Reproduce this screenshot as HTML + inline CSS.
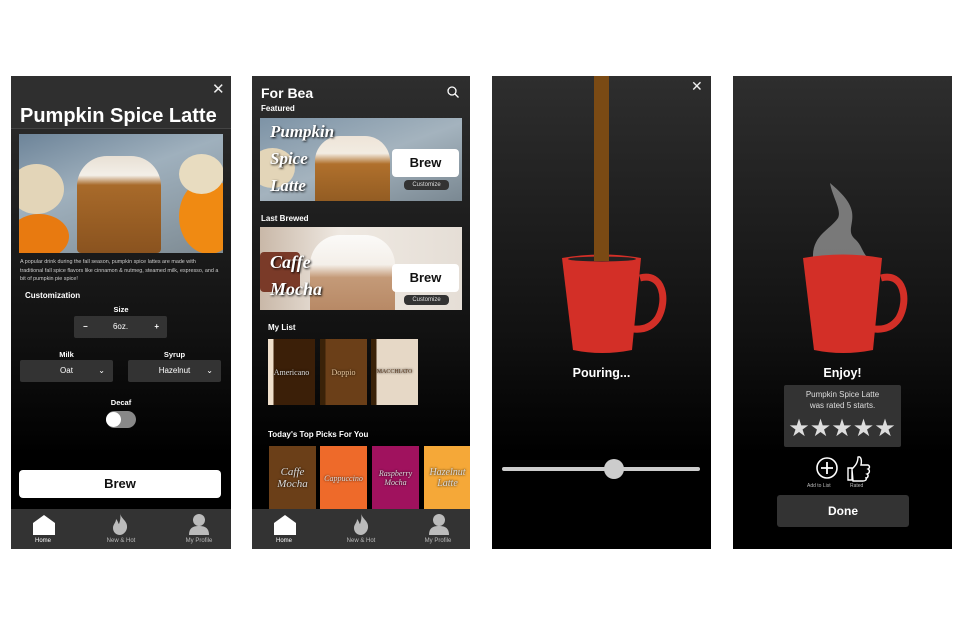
<!DOCTYPE html>
<html><head><meta charset="utf-8"><style>
*{margin:0;padding:0;box-sizing:border-box}
body{width:964px;height:626px;background:#fff;position:relative;overflow:hidden;font-family:"Liberation Sans",sans-serif;color:#fff}
.s{position:absolute;top:76px;height:473px;background:linear-gradient(#2e2e2e,#111 55%,#000 80%);overflow:hidden}
.a{position:absolute}
.nav{position:absolute;left:0;right:0;bottom:0;height:40px;background:#333}
.nav div{position:absolute;top:29px;font-size:6px;color:#bbb;width:60px;text-align:center}
.b{font-weight:bold}
.dd{position:absolute;height:22px;background:#333;border-radius:2px;font-size:8px;line-height:22px;text-align:center}
.tile{position:absolute;width:47px;height:66px;font-family:"Liberation Serif",serif;font-size:8px;color:#ddd;display:flex;align-items:center;justify-content:center;text-shadow:0 0 2px #000}
.scr{font-family:"Liberation Serif",serif;font-style:italic;font-weight:bold;color:#fff;text-shadow:1px 1px 2px #000}
.brew{position:absolute;background:#fff;color:#111;border-radius:4px;font-weight:bold;text-align:center}
.cz{position:absolute;background:#333;color:#ddd;border-radius:4px;font-size:6px;text-align:center}
</style></head><body>

<!-- Screen 1 -->
<div class="s" style="left:11px;width:220px">
 <div class="a" style="left:0;top:0;width:220px;height:53px;background:#2f2f2f;border-bottom:1px solid #444"></div>
 <div class="a" style="left:201px;top:4px;font-size:15px;color:#eee">✕</div>
 <div class="a b" style="left:9px;top:29px;font-size:20px">Pumpkin Spice Latte</div>
 <div class="a" style="left:8px;top:58px;width:204px;height:119px;background:linear-gradient(160deg,#6d8499,#9fb0bd 40%,#7d8a92);overflow:hidden">
  <div class="a" style="left:58px;top:22px;width:84px;height:97px;background:linear-gradient(#e8e0d4 0,#f3efe8 20%,#a86a2a 30%,#8a531f);border-radius:30px 30px 4px 4px"></div>
  <div class="a" style="left:-10px;top:80px;width:60px;height:45px;background:#e87a10;border-radius:50%"></div>
  <div class="a" style="left:-10px;top:30px;width:55px;height:50px;background:#e3d5b8;border-radius:50%"></div>
  <div class="a" style="left:160px;top:45px;width:60px;height:75px;background:#f08a12;border-radius:50%"></div>
  <div class="a" style="left:160px;top:20px;width:45px;height:40px;background:#e8dcc0;border-radius:50%"></div>
 </div>
 <div class="a" style="left:9px;top:182px;width:200px;font-size:5.4px;line-height:8.5px;color:#ccc">A popular drink during the fall season, pumpkin spice lattes are made with traditional fall spice flavors like cinnamon &amp; nutmeg, steamed milk, espresso, and a bit of pumpkin pie spice!</div>
 <div class="a b" style="left:14px;top:215px;font-size:8px">Customization</div>
 <div class="a b" style="left:0;width:220px;text-align:center;top:229px;font-size:7.5px">Size</div>
 <div class="dd" style="left:63px;top:240px;width:93px"><span style="position:absolute;left:9px" class="b">−</span>6oz.<span style="position:absolute;right:8px" class="b">+</span></div>
 <div class="a b" style="left:9px;width:93px;text-align:center;top:274px;font-size:7.5px">Milk</div>
 <div class="a b" style="left:117px;width:93px;text-align:center;top:274px;font-size:7.5px">Syrup</div>
 <div class="dd" style="left:9px;top:284px;width:93px">Oat<span style="position:absolute;right:8px">⌄</span></div>
 <div class="dd" style="left:117px;top:284px;width:93px">Hazelnut<span style="position:absolute;right:8px">⌄</span></div>
 <div class="a b" style="left:0;width:220px;text-align:center;top:322px;font-size:7.5px">Decaf</div>
 <div class="a" style="left:95px;top:335px;width:30px;height:17px;border-radius:9px;background:#888"></div>
 <div class="a" style="left:95px;top:336px;width:15px;height:15px;border-radius:50%;background:#fff"></div>
 <div class="brew" style="left:8px;top:394px;width:202px;height:28px;font-size:13px;line-height:28px">Brew</div>
 <div class="nav">
  <svg class="a" style="left:22px;top:6px" width="22" height="20" viewBox="0 0 22 20"><path d="M0 8L11 0L22 8V20H0Z" fill="#fff"/></svg>
  <svg class="a" style="left:101px;top:4px" width="16" height="22" viewBox="0 0 16 22"><path d="M8 0C9 6 16 8 15 15C14 20 10 22 8 22C4 22 1 19 1 15C1 11 4 10 4 6C6 8 6 10 7 11C8 8 9 5 8 0Z" fill="#bbb"/></svg>
  <svg class="a" style="left:177px;top:4px" width="22" height="22" viewBox="0 0 22 22"><circle cx="11" cy="7" r="6" fill="#bbb"/><path d="M1 22C1 15 5 13 11 13C17 13 21 15 21 22Z" fill="#bbb"/></svg>
  <div style="left:2px;color:#fff">Home</div><div style="left:80px">New &amp; Hot</div><div style="left:158px">My Profile</div>
 </div>
</div>

<!-- Screen 2 -->
<div class="s" style="left:252px;width:218px">
 <div class="a b" style="left:9px;top:9px;font-size:14px">For Bea</div>
 <svg class="a" style="left:195px;top:10px" width="12" height="12" viewBox="0 0 12 12"><circle cx="5" cy="5" r="4" stroke="#fff" stroke-width="1.3" fill="none"/><path d="M8 8L11.5 11.5" stroke="#fff" stroke-width="1.3"/></svg>
 <div class="a b" style="left:9px;top:28px;font-size:8px">Featured</div>
 <div class="a" style="left:8px;top:42px;width:202px;height:83px;background:linear-gradient(160deg,#7d93a6,#a4b3be 50%,#7a8892);overflow:hidden">
  <div class="a" style="left:55px;top:18px;width:75px;height:70px;background:linear-gradient(#eee4d8,#f2ece2 25%,#b0702c 40%,#8f5a22);border-radius:25px 25px 0 0"></div>
  <div class="a" style="left:-10px;top:30px;width:45px;height:40px;background:#e3d5b8;border-radius:50%"></div>
  <div class="a scr" style="left:10px;top:0px;font-size:17px;line-height:27px">Pumpkin<br>Spice<br>Latte</div>
 </div>
 <div class="brew" style="left:140px;top:73px;width:67px;height:28px;font-size:13px;line-height:28px">Brew</div>
 <div class="cz" style="left:152px;top:104px;width:45px;height:10px;line-height:10px">Customize</div>
 <div class="a b" style="left:9px;top:138px;font-size:8px">Last Brewed</div>
 <div class="a" style="left:8px;top:151px;width:202px;height:83px;background:linear-gradient(90deg,#c9b8a8,#efe9e2 40%,#e5ded6);overflow:hidden">
  <div class="a" style="left:50px;top:8px;width:85px;height:85px;background:linear-gradient(#fbfaf8,#f4efe9 35%,#c49a78 50%,#b48460);border-radius:30px 30px 0 0"></div>
  <div class="a" style="left:0;top:25px;width:40px;height:40px;background:#7a3a28;border-radius:4px"></div>
  <div class="a scr" style="left:10px;top:22px;font-size:18px;line-height:27px">Caffe<br>Mocha</div>
 </div>
 <div class="brew" style="left:140px;top:188px;width:67px;height:28px;font-size:13px;line-height:28px">Brew</div>
 <div class="cz" style="left:152px;top:219px;width:45px;height:10px;line-height:10px">Customize</div>
 <div class="a b" style="left:16px;top:247px;font-size:8px">My List</div>
 <div class="tile" style="left:16px;top:263px;background:linear-gradient(90deg,#f0e0cc 0 12%,#3b1f08 12%)">Americano</div>
 <div class="tile" style="left:68px;top:263px;background:linear-gradient(90deg,#3a2208 0 12%,#6b3f18 12%);color:#e8c8a0">Doppio</div>
 <div class="tile" style="left:119px;top:263px;background:linear-gradient(90deg,#3a2208 0 12%,#e6d8c6 12%);color:#5a3a20;font-size:6px">MACCHIATO</div>
 <div class="a b" style="left:16px;top:354px;font-size:8px">Today's Top Picks For You</div>
 <div class="tile" style="left:17px;top:370px;height:64px;background:#6b3f18;font-size:11px;text-align:center;font-style:italic">Caffe<br>Mocha</div>
 <div class="tile" style="left:68px;top:370px;height:64px;background:#ee6a2a;font-style:italic">Cappuccino</div>
 <div class="tile" style="left:120px;top:370px;height:64px;background:#a0125e;font-style:italic;text-align:center">Raspberry<br>Mocha</div>
 <div class="tile" style="left:172px;top:370px;height:64px;background:#f5a838;font-style:italic;text-align:center;font-size:10px">Hazelnut<br>Latte</div>
 <div class="nav">
  <svg class="a" style="left:22px;top:6px" width="22" height="20" viewBox="0 0 22 20"><path d="M0 8L11 0L22 8V20H0Z" fill="#fff"/></svg>
  <svg class="a" style="left:101px;top:4px" width="16" height="22" viewBox="0 0 16 22"><path d="M8 0C9 6 16 8 15 15C14 20 10 22 8 22C4 22 1 19 1 15C1 11 4 10 4 6C6 8 6 10 7 11C8 8 9 5 8 0Z" fill="#bbb"/></svg>
  <svg class="a" style="left:176px;top:4px" width="22" height="22" viewBox="0 0 22 22"><circle cx="11" cy="7" r="6" fill="#bbb"/><path d="M1 22C1 15 5 13 11 13C17 13 21 15 21 22Z" fill="#bbb"/></svg>
  <div style="left:2px;color:#fff">Home</div><div style="left:79px">New &amp; Hot</div><div style="left:156px">My Profile</div>
 </div>
</div>

<!-- Screen 3 -->
<div class="s" style="left:492px;width:219px">
 <div class="a" style="left:199px;top:2px;font-size:14px;color:#eee">✕</div>
 <svg class="a" style="left:0;top:0" width="219" height="473" viewBox="492 76 219 473">
  <path d="M640 278C663 272 668 300 658 318C652 327 643 330 633 329" stroke="#d32f27" stroke-width="7" fill="none"/>
  <path d="M562 258Q602 251 641 258L632 350Q602 356 573 350Z" fill="#d32f27"/>
  <ellipse cx="602" cy="259" rx="34" ry="2.5" fill="#222"/>
  <rect x="594" y="76" width="15" height="185" fill="#7a4a14"/>
  <rect x="502" y="467" width="198" height="4" rx="2" fill="#ccc"/>
  <circle cx="614" cy="469" r="10" fill="#ccc"/>
 </svg>
 <div class="a b" style="left:0;width:219px;text-align:center;top:290px;font-size:12.5px">Pouring...</div>
</div>

<!-- Screen 4 -->
<div class="s" style="left:733px;width:219px">
 <svg class="a" style="left:0;top:0" width="219" height="473" viewBox="733 76 219 473">
  <path d="M881 278C904 272 909 300 899 318C893 327 884 330 874 329" stroke="#d32f27" stroke-width="7" fill="none"/>
  <path d="M813 258C812 235 830 230 838 218C842 210 832 196 830 183C838 190 850 200 852 212C854 225 846 232 856 240C862 246 862 252 868 258Q843 252 813 258Z" fill="#8a8a8a" opacity="0.85"/>
  <path d="M803 258Q843 251 882 258L873 350Q843 356 814 350Z" fill="#d32f27"/>
  <rect x="784" y="385" width="117" height="62" rx="2" fill="#333"/>
  <text x="842" y="436" text-anchor="middle" font-size="24" fill="#ddd" font-family="DejaVu Sans">★★★★★</text>
  <circle cx="827" cy="468" r="10" stroke="#fff" stroke-width="1.6" fill="none"/>
  <path d="M827 462V474M821 468H833" stroke="#fff" stroke-width="1.8"/>
  <path d="M848 468H852V480H848ZM852 469C855 466 858 463 858 457C861 456 862 460 861 465H868C870 466 870 468 868 469C870 470 870 473 867 474C869 475 868 478 866 478C867 480 865 481 863 481H853Z" stroke="#fff" stroke-width="1.4" fill="none"/>
  <rect x="777" y="495" width="132" height="32" rx="3" fill="#333"/>
 </svg>
 <div class="a b" style="left:0;width:219px;text-align:center;top:290px;font-size:12.5px">Enjoy!</div>
 <div class="a" style="left:51px;width:117px;text-align:center;top:313px;font-size:8px;line-height:11px;color:#ddd">Pumpkin Spice Latte<br>was rated 5 starts.</div>
 <div class="a" style="left:74px;top:407px;font-size:5px;color:#bbb">Add to List</div>
 <div class="a" style="left:117px;top:407px;font-size:5px;color:#bbb">Rated</div>
 <div class="a b" style="left:44px;width:132px;text-align:center;top:428px;font-size:12px">Done</div>
</div>
</body></html>
